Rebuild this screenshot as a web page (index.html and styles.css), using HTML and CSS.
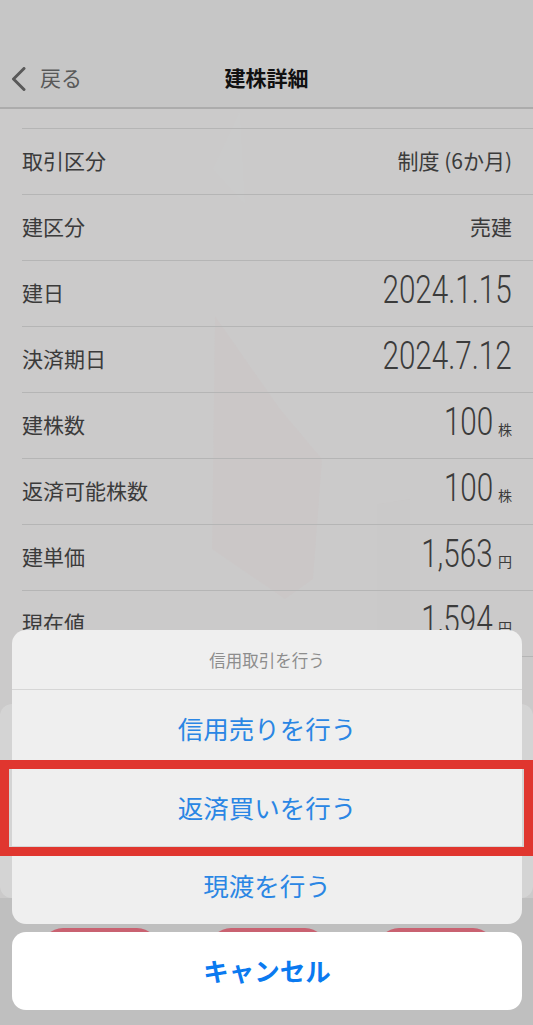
FILE: index.html
```html
<!DOCTYPE html>
<html lang="ja">
<head>
  <meta charset="UTF-8" />
  <meta name="viewport" content="width=device-width, initial-scale=1.0"/>
  <title>建株詳細</title>
  <link rel="stylesheet" href="styles.css">
</head>
<body>
  <div class="screen">
    <header class="navbar">
      <div class="nav">
        <a class="back">
          <svg width="18" height="24" viewBox="0 0 18 24"><path d="M14 1.5 L3.5 12 L14 22.5" fill="none" stroke="#6c6c6c" stroke-width="3" stroke-linecap="round" stroke-linejoin="round"/></svg>
          戻る
        </a>
        <h1>建株詳細</h1>
      </div>
    </header>

    <main class="detail">
      <!-- faint background watermark -->
      <svg class="mark" width="533" height="560" viewBox="0 0 533 560">
        <path d="M240 2 L213 60 L245 95 Z" fill="#ffffff" opacity="0.1"/>
        <path d="M215 207 L280 300 L322 350 L313 470 L285 490 L212 440 Z" fill="#f5e2e2" opacity="0.12"/>
        <path d="M377 395 L410 390 L410 560 L377 560 Z" fill="#f5e2e2" opacity="0.08"/>
      </svg>

      <ul class="rows">
        <li><span class="label">取引区分</span><span class="value">制度 (6か月)</span></li>
        <li><span class="label">建区分</span><span class="value">売建</span></li>
        <li><span class="label">建日</span><span class="value"><span class="num">2024.1.15</span></span></li>
        <li><span class="label">決済期日</span><span class="value"><span class="num">2024.7.12</span></span></li>
        <li><span class="label">建株数</span><span class="value"><span class="num">100</span><span class="unit">株</span></span></li>
        <li><span class="label">返済可能株数</span><span class="value"><span class="num">100</span><span class="unit">株</span></span></li>
        <li><span class="label">建単価</span><span class="value"><span class="num">1,563</span><span class="unit">円</span></span></li>
        <li><span class="label">現在値</span><span class="value"><span class="num">1,594</span><span class="unit">円</span></span></li>
      </ul>

      <div class="order-card"></div>
      <div class="order-actions">
        <span class="pill"></span>
        <span class="pill"></span>
        <span class="pill"></span>
      </div>
    </main>

    <div class="dim"></div>

    <!-- Action sheet -->
    <div class="sheet">
      <div class="sheet-group">
        <div class="sheet-title">信用取引を行う</div>
        <button class="sheet-option">信用売りを行う</button>
        <button class="sheet-option">返済買いを行う</button>
        <button class="sheet-option">現渡を行う</button>
      </div>
      <button class="sheet-cancel">キャンセル</button>
    </div>

    <div class="highlight"></div>
  </div>
</body>
</html>
```

FILE: styles.css
```css
body {
  margin: 0;
  padding: 0;
  font-family: "Noto Sans CJK JP", "Noto Sans", sans-serif;
  background: #e6e6e6;
}

.screen {
  position: relative;
  width: 533px;
  height: 1025px;
  overflow: hidden;
  background: #e6e6e6;
}

/* Header */
.navbar {
  background: #efefef;
  padding-top: 47px;
  border-bottom: 2px solid #cfcfcf;
}

.nav {
  position: relative;
  height: 60px;
  display: flex;
  align-items: center;
  justify-content: center;
}

.back {
  position: absolute;
  left: 10px;
  top: 0;
  height: 60px;
  display: flex;
  align-items: center;
  gap: 12px;
  font-size: 21px;
  color: #6c6c6c;
}

.back svg {
  margin-top: 3px;
}

.nav h1 {
  margin: 0;
  font-size: 21px;
  font-weight: 700;
  color: #151515;
}

/* Detail list */
.detail {
  position: relative;
  background: #f4f3f3;
  padding-top: 19px;
}

.mark {
  position: absolute;
  left: 0;
  top: 0;
}

.rows {
  position: relative;
  list-style: none;
  margin: 0 0 0 22px;
  padding: 0;
  border-top: 1px solid #dadada;
}

.rows li {
  height: 62px;
  padding-bottom: 3px;
  border-bottom: 1px solid #dadada;
  display: flex;
  justify-content: space-between;
  align-items: center;
  padding-right: 21px;
}

.label {
  font-size: 21px;
  color: #484848;
}

.value {
  font-size: 21px;
  color: #484848;
  display: flex;
  align-items: baseline;
}

.num {
  display: inline-block;
  font-family: Roboto, "Liberation Sans", sans-serif;
  font-weight: 300;
  font-size: 38px;
  line-height: 1;
  transform: scaleX(0.78);
  transform-origin: right;
  margin-left: -40px;
  position: relative;
  top: -2px;
}

.unit {
  font-size: 14px;
  margin-left: 5px;
  position: relative;
  top: -2px;
}

.order-card {
  position: relative;
  margin-top: 47px;
  height: 194px;
  background: #fff;
  border-radius: 12px;
}

.order-actions {
  display: flex;
  justify-content: space-between;
  padding: 30px 38px 60px 41px;
  background: #e6e6e6;
}

.pill {
  width: 118px;
  height: 44px;
  border-radius: 22px;
  background: #f27689;
}

.dim {
  position: absolute;
  inset: 0;
  background: rgba(0, 0, 0, 0.17);
}

/* Action sheet */
.sheet {
  position: absolute;
  left: 12px;
  right: 11px;
  bottom: 15px;
  display: flex;
  flex-direction: column;
  gap: 8px;
}

.sheet-group {
  background: #efefef;
  border-radius: 14px;
  overflow: hidden;
}

.sheet-title {
  height: 59px;
  border-bottom: 1px solid #d6d6d6;
  display: flex;
  align-items: center;
  justify-content: center;
  font-size: 16.5px;
  color: #8d8d8d;
}

.sheet-option,
.sheet-cancel {
  display: block;
  width: 100%;
  border: none;
  background: none;
  font-family: "Noto Sans CJK JP", sans-serif;
  font-size: 25.5px;
  padding: 0 0 3px;
  cursor: pointer;
}

.sheet-option {
  height: 78px;
  color: #2a86e4;
}

.sheet-option + .sheet-option {
  border-top: 1px solid #d6d6d6;
}

.sheet-cancel {
  height: 78px;
  background: #fff;
  border-radius: 14px;
  color: #0a7af0;
  font-weight: 700;
}

/* Red annotation box */
.highlight {
  position: absolute;
  left: 0;
  right: 0;
  top: 760px;
  height: 96px;
  border: 9px solid #e0362f;
  box-sizing: border-box;
}
```
